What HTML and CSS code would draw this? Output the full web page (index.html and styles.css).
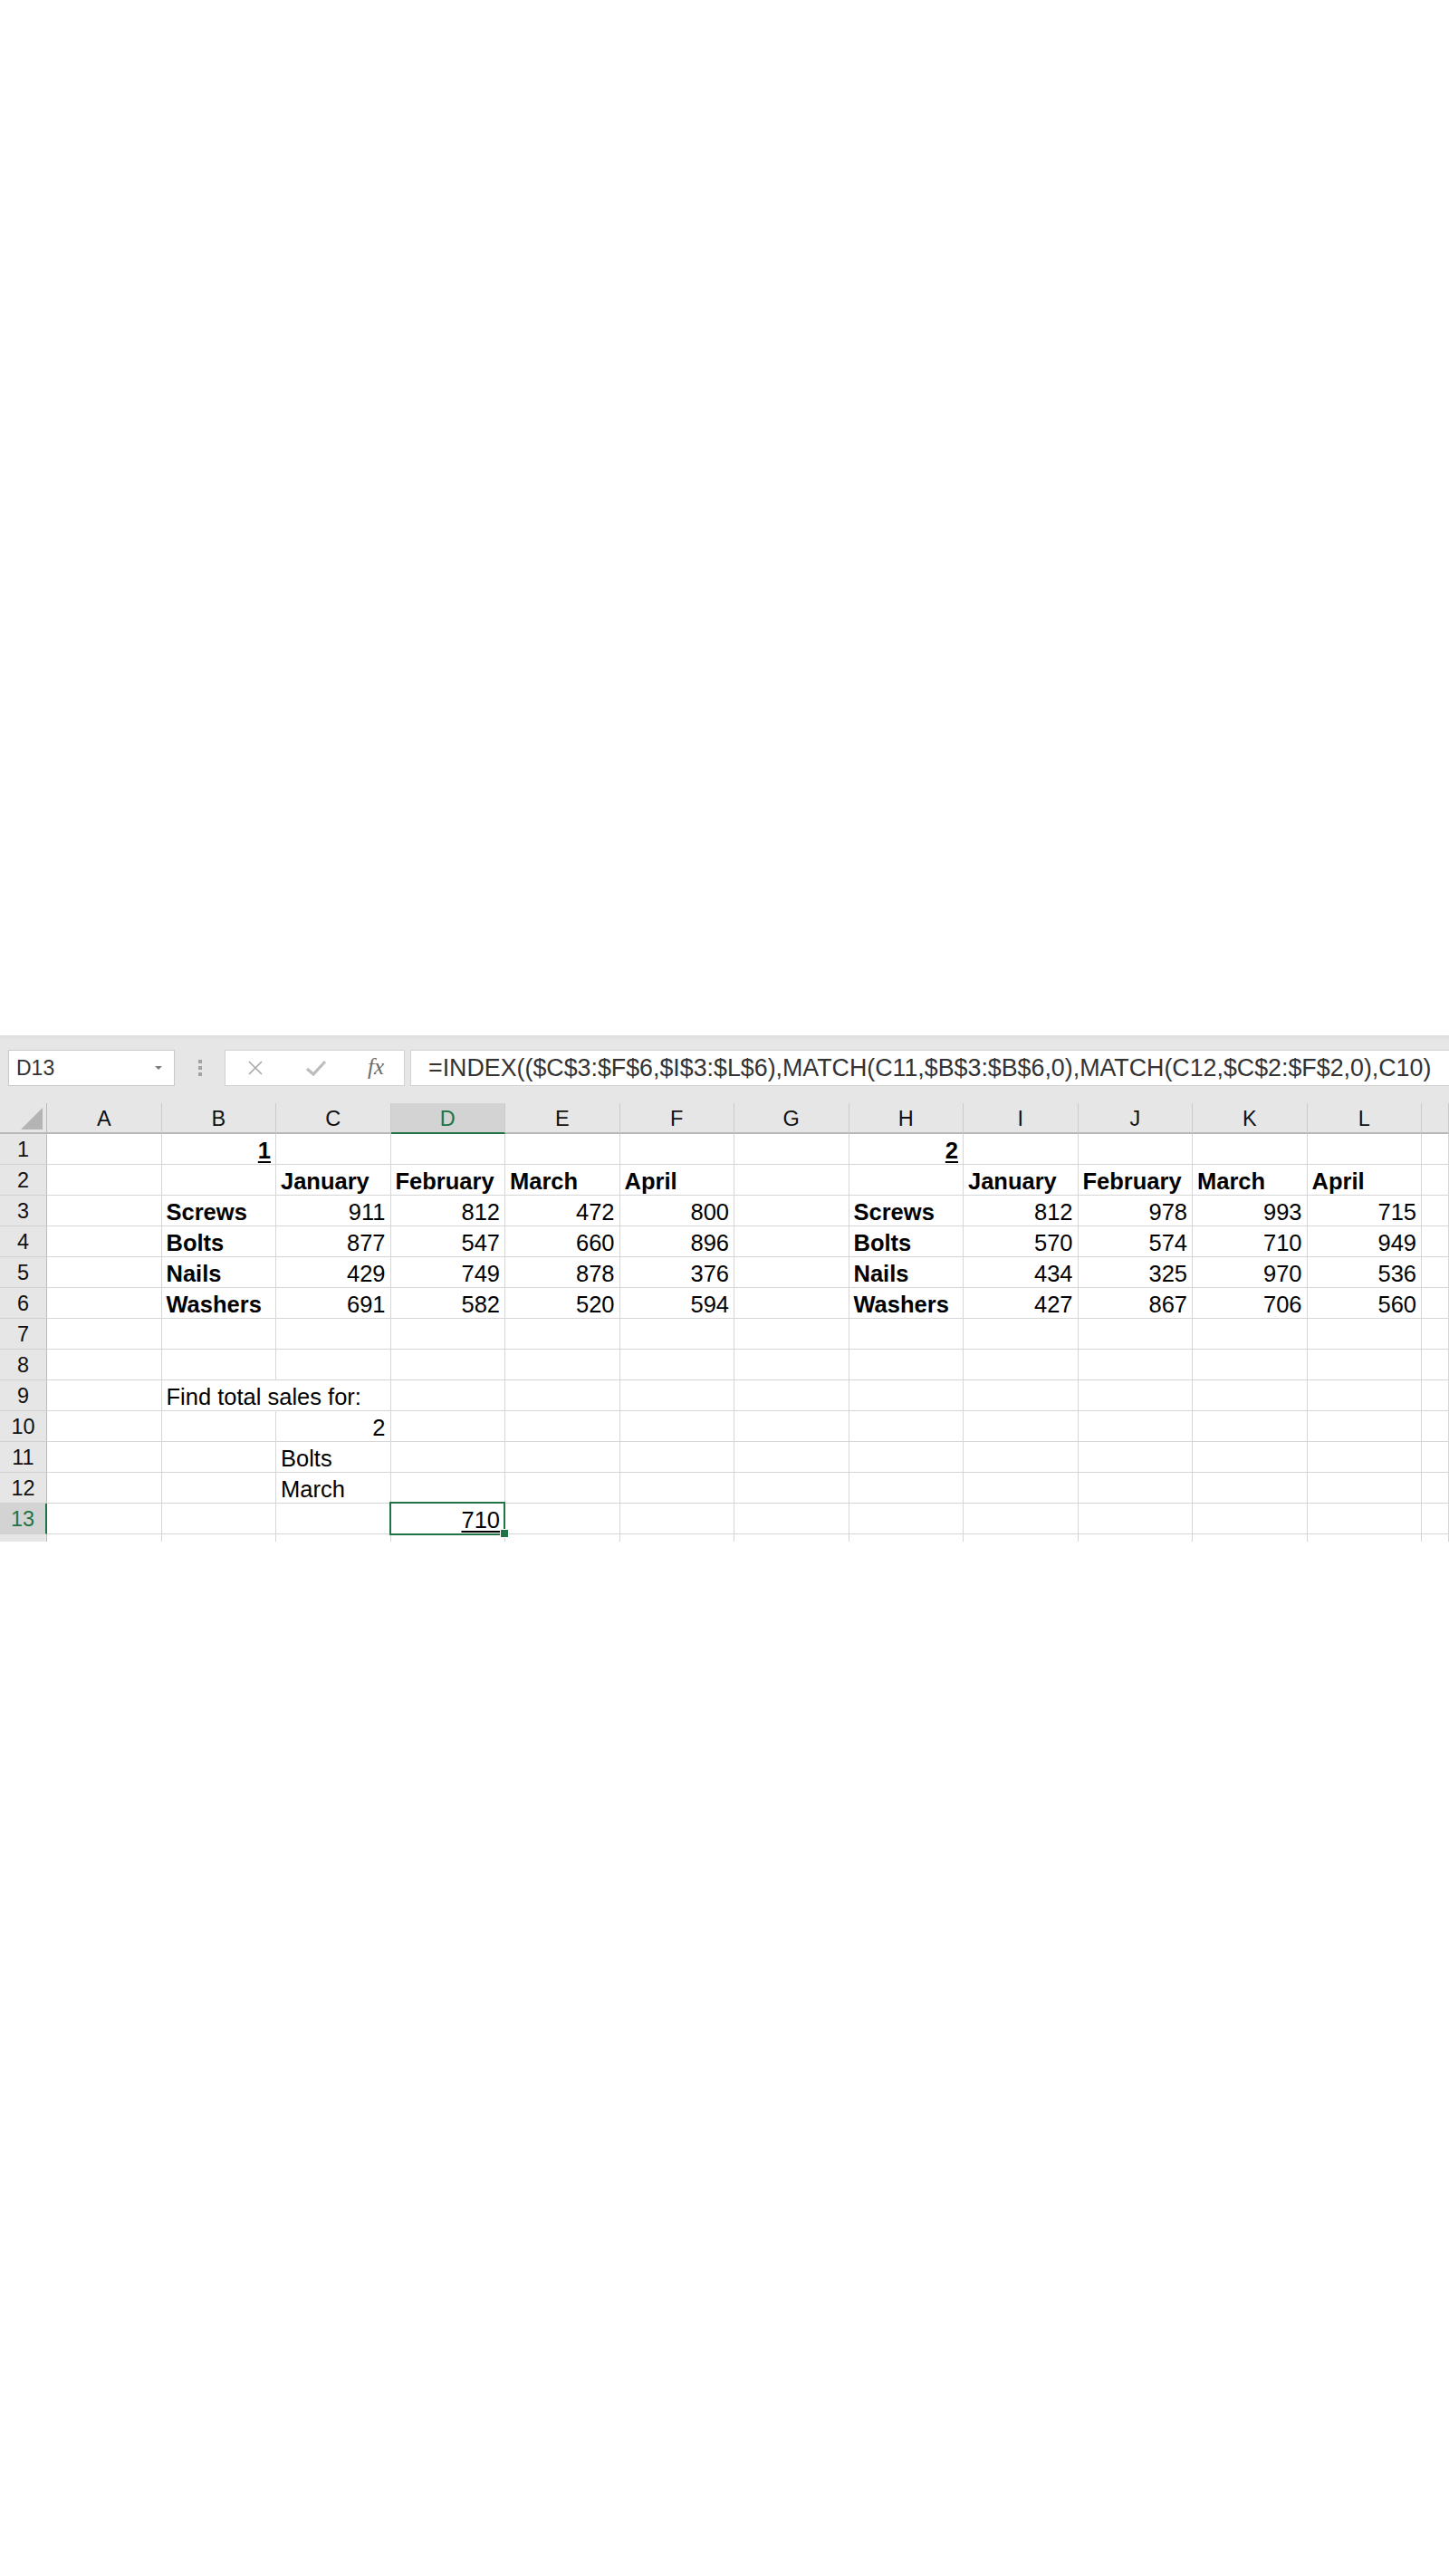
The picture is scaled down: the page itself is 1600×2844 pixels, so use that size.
FILE: index.html
```html
<!DOCTYPE html>
<html lang="en">
<head>
  <meta charset="UTF-8">
  <meta name="viewport" content="width=device-width, initial-scale=1.0">
  <title>INDEX with multiple ranges</title>
  <link rel="stylesheet" href="styles.css">
</head>
<body>
  <div class="workbook">
    <!-- name box + formula bar -->
    <div class="formula-bar">
      <div class="name-box">
        <span>D13</span>
        <span class="caret"></span>
      </div>
      <div class="grip"><i></i><i></i><i></i></div>
      <div class="fx-buttons">
        <svg width="22" height="22" viewBox="0 0 22 22"><path d="M4 4 L18 18 M18 4 L4 18" stroke="#a8a8a8" stroke-width="1.6" fill="none"/></svg>
        <svg width="26" height="22" viewBox="0 0 26 22"><path d="M3 12 L10 18 L23 4" stroke="#bdbdbd" stroke-width="3.2" fill="none"/></svg>
        <span class="fx">fx</span>
      </div>
      <div class="formula">=INDEX(($C$3:$F$6,$I$3:$L$6),MATCH(C11,$B$3:$B$6,0),MATCH(C12,$C$2:$F$2,0),C10)</div>
    </div>

    <!-- worksheet grid: row header + columns A..L + partial M -->
    <div class="sheet">
      <div class="corner"><svg width="24" height="24" viewBox="0 0 24 24"><polygon points="24,0 24,24 0,24" fill="#b4b4b4"/></svg></div>
      <div class="col">A</div><div class="col">B</div><div class="col">C</div><div class="col active">D</div>
      <div class="col">E</div><div class="col">F</div><div class="col">G</div><div class="col">H</div>
      <div class="col">I</div><div class="col">J</div><div class="col">K</div><div class="col">L</div>
      <div class="col"></div>

      <div class="row">1</div>
      <div></div><div class="num b u">1</div><div></div><div></div><div></div><div></div><div></div>
      <div class="num b u">2</div><div></div><div></div><div></div><div></div><div></div>

      <div class="row">2</div>
      <div></div><div></div><div class="b">January</div><div class="b">February</div><div class="b">March</div><div class="b">April</div><div></div>
      <div></div><div class="b">January</div><div class="b">February</div><div class="b">March</div><div class="b">April</div><div></div>

      <div class="row">3</div>
      <div></div><div class="b">Screws</div><div class="num">911</div><div class="num">812</div><div class="num">472</div><div class="num">800</div><div></div>
      <div class="b">Screws</div><div class="num">812</div><div class="num">978</div><div class="num">993</div><div class="num">715</div><div></div>

      <div class="row">4</div>
      <div></div><div class="b">Bolts</div><div class="num">877</div><div class="num">547</div><div class="num">660</div><div class="num">896</div><div></div>
      <div class="b">Bolts</div><div class="num">570</div><div class="num">574</div><div class="num">710</div><div class="num">949</div><div></div>

      <div class="row">5</div>
      <div></div><div class="b">Nails</div><div class="num">429</div><div class="num">749</div><div class="num">878</div><div class="num">376</div><div></div>
      <div class="b">Nails</div><div class="num">434</div><div class="num">325</div><div class="num">970</div><div class="num">536</div><div></div>

      <div class="row">6</div>
      <div></div><div class="b">Washers</div><div class="num">691</div><div class="num">582</div><div class="num">520</div><div class="num">594</div><div></div>
      <div class="b">Washers</div><div class="num">427</div><div class="num">867</div><div class="num">706</div><div class="num">560</div><div></div>

      <div class="row">7</div>
      <div></div><div></div><div></div><div></div><div></div><div></div><div></div>
      <div></div><div></div><div></div><div></div><div></div><div></div>

      <div class="row">8</div>
      <div></div><div></div><div></div><div></div><div></div><div></div><div></div>
      <div></div><div></div><div></div><div></div><div></div><div></div>

      <div class="row">9</div>
      <div></div><div class="spill">Find total sales for:</div><div></div><div></div><div></div><div></div><div></div>
      <div></div><div></div><div></div><div></div><div></div><div></div>

      <div class="row">10</div>
      <div></div><div></div><div class="num">2</div><div></div><div></div><div></div><div></div>
      <div></div><div></div><div></div><div></div><div></div><div></div>

      <div class="row">11</div>
      <div></div><div></div><div>Bolts</div><div></div><div></div><div></div><div></div>
      <div></div><div></div><div></div><div></div><div></div><div></div>

      <div class="row">12</div>
      <div></div><div></div><div>March</div><div></div><div></div><div></div><div></div>
      <div></div><div></div><div></div><div></div><div></div><div></div>

      <div class="row active">13</div>
      <div></div><div></div><div></div><div class="num u selected">710</div><div></div><div></div><div></div>
      <div></div><div></div><div></div><div></div><div></div><div></div>

      <div class="row tail"></div>
      <div class="tail"></div><div class="tail"></div><div class="tail"></div><div class="tail"></div><div class="tail"></div><div class="tail"></div><div class="tail"></div>
      <div class="tail"></div><div class="tail"></div><div class="tail"></div><div class="tail"></div><div class="tail"></div><div class="tail"></div>
    </div>
  </div>
</body>
</html>
```

FILE: styles.css
```css
* {
  box-sizing: border-box;
}

body {
  margin: 0;
  background: #fff;
  font-family: "Liberation Sans", Arial, sans-serif;
  color: #000;
}

.workbook {
  margin-top: 1143px;
}

/* ---- formula bar ---- */
.formula-bar {
  display: flex;
  align-items: flex-start;
  height: 75px;
  padding: 15px 0 0 9px;
  background: linear-gradient(#dedede, #e6e6e6 4px);
  border-top: 1px solid #e0e0e0;
}

.name-box {
  width: 184px;
  height: 40px;
  background: #fff;
  border: 1px solid #c9c9c9;
  display: flex;
  align-items: center;
  justify-content: space-between;
  padding: 0 13px 0 8px;
  font-size: 23px;
  color: #333;
}

.caret {
  width: 0;
  height: 0;
  border-left: 4px solid transparent;
  border-right: 4px solid transparent;
  border-top: 4px solid #7a7a7a;
}

.grip {
  width: 55px;
  height: 40px;
  display: flex;
  flex-direction: column;
  align-items: center;
  justify-content: center;
  gap: 3px;
}

.grip i {
  width: 4px;
  height: 4px;
  background: #a3a3a3;
}

.fx-buttons {
  width: 199px;
  height: 40px;
  background: #fff;
  border: 1px solid #d2d2d2;
  display: flex;
  align-items: center;
  justify-content: space-around;
}

.fx {
  font-family: "Liberation Serif", "Times New Roman", serif;
  font-style: italic;
  font-size: 25px;
  color: #6b6b6b;
  margin-bottom: 3px;
}

.formula {
  flex: 1;
  height: 40px;
  margin-left: 6px;
  background: #fff;
  border: 1px solid #d2d2d2;
  border-right: none;
  padding-left: 19px;
  display: flex;
  align-items: center;
  font-size: 26.8px;
  color: #333;
  white-space: nowrap;
  overflow: hidden;
}

/* ---- worksheet ---- */
.sheet {
  display: grid;
  grid-template-columns: 52px repeat(12, 126.5px) 1fr;
  grid-template-rows: repeat(14, 34px) 8px;
  font-size: 25.5px;
}

.sheet > div {
  display: flex;
  align-items: flex-end;
  padding: 0 5px;
  border-right: 1px solid #d6d6d6;
  border-bottom: 1px solid #d6d6d6;
  white-space: nowrap;
  overflow: hidden;
  line-height: 1.12;
}

.sheet > .corner {
  background: #e6e6e6;
  border-right: 1px solid #bcbcbc;
  border-bottom: 2px solid #b8b8b8;
  align-items: flex-end;
  justify-content: flex-end;
  padding: 0 4px 3px 0;
}

.sheet > .col {
  background: #e6e6e6;
  justify-content: center;
  align-items: center;
  font-size: 23.5px;
  color: #111;
  border-right: 1px solid #cbcbcb;
  border-bottom: 2px solid #b8b8b8;
  padding: 2px 0 0;
}

.sheet > .row {
  background: #e6e6e6;
  justify-content: center;
  align-items: center;
  font-size: 23.5px;
  color: #111;
  border-right: 1px solid #bcbcbc;
  border-bottom: 1px solid #d0d0d0;
  padding: 2px 0 0;
}

.sheet > .col.active {
  background: #d3d3d3;
  color: #217346;
  border-bottom-color: #217346;
}

.sheet > .row.active {
  background: #d3d3d3;
  color: #217346;
  border-right: 2px solid #217346;
}

.sheet > .tail {
  border-bottom: none;
}

.b {
  font-weight: bold;
}

.sheet > .num {
  justify-content: flex-end;
}

.u {
  text-decoration: underline;
  text-decoration-thickness: 2px;
  text-underline-offset: 3px;
}

/* text running into the empty neighbour cell */
.sheet > .spill {
  overflow: visible;
  border-right-color: transparent;
}

/* active cell outline with fill handle */
.sheet > .selected {
  position: relative;
  overflow: visible;
}

.selected::after {
  content: "";
  position: absolute;
  top: -2px;
  left: -2px;
  right: -1px;
  bottom: -2px;
  border: 2px solid #217346;
}

.selected::before {
  content: "";
  position: absolute;
  right: -5px;
  bottom: -5px;
  width: 8px;
  height: 8px;
  background: #217346;
  border: 1px solid #fff;
  z-index: 1;
}
```
